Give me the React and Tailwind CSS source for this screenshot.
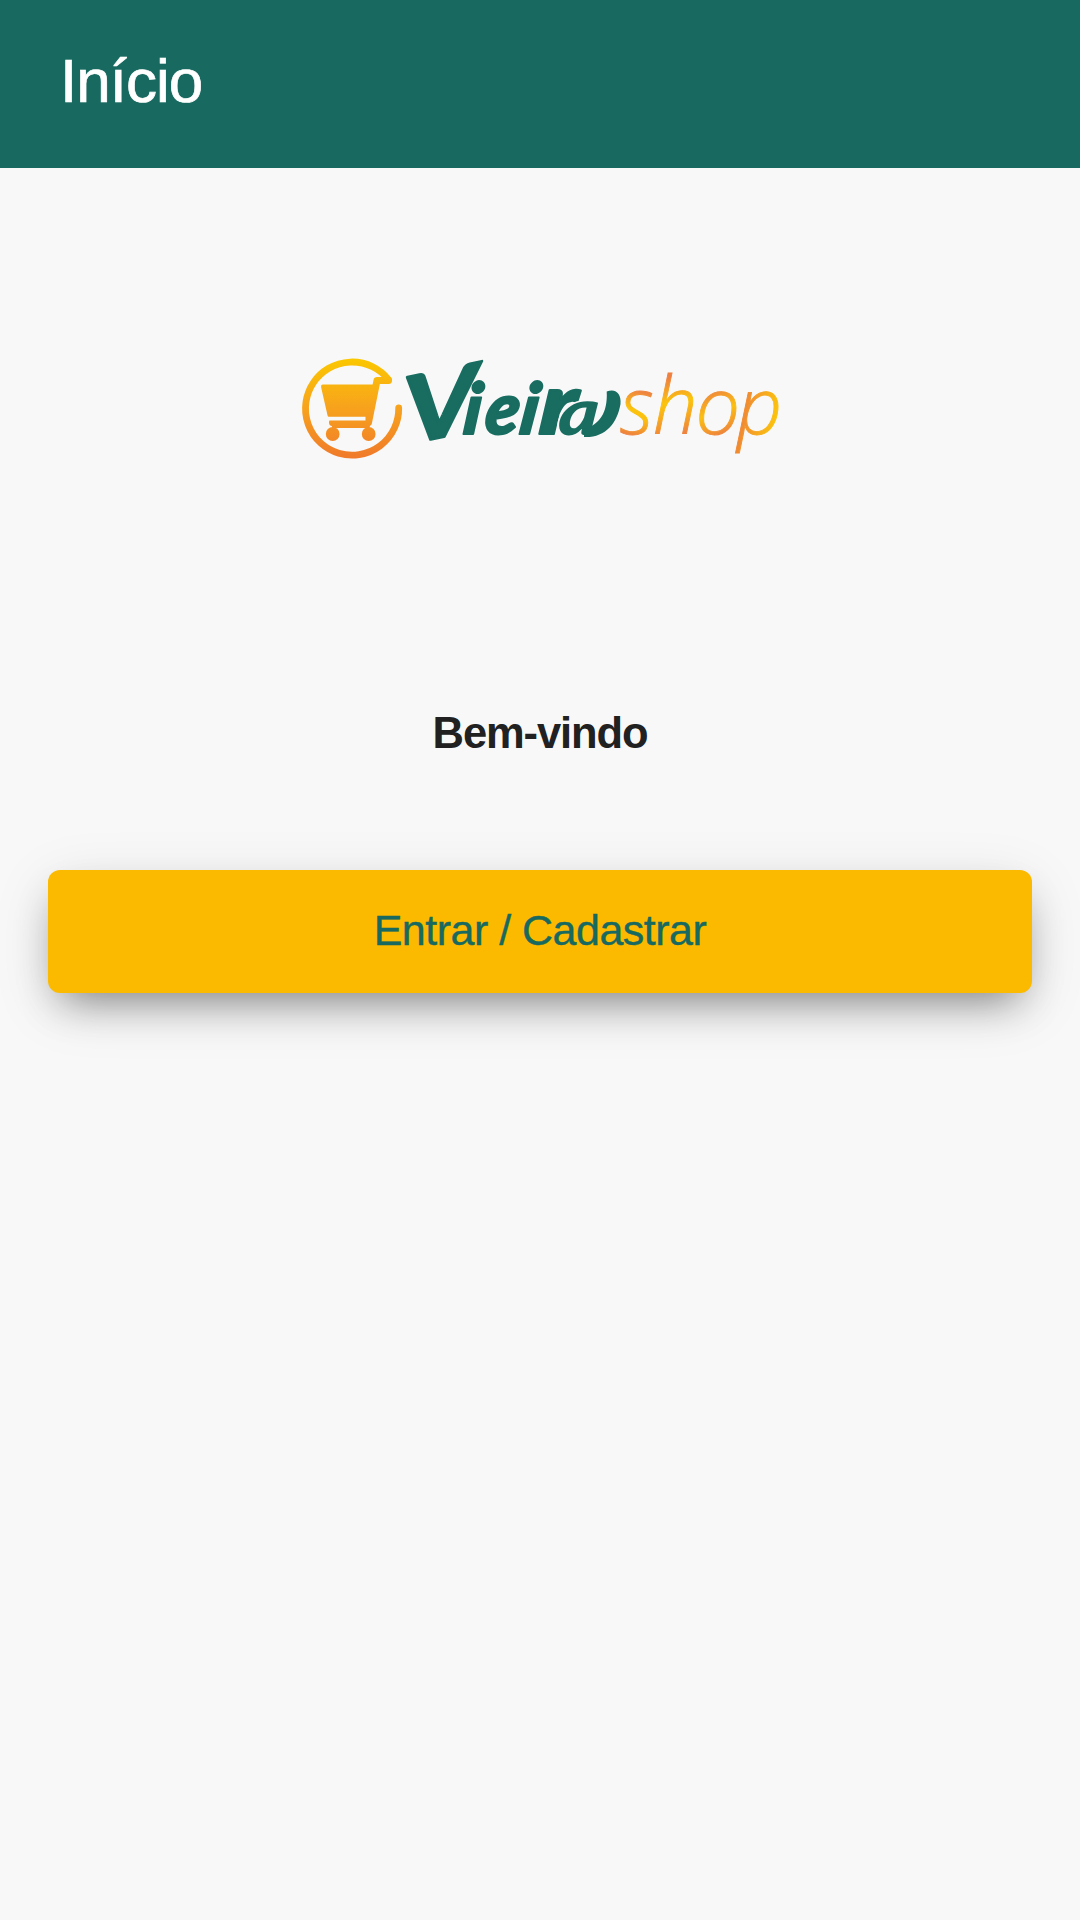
function Logo() {
  return (
    <svg className="block h-[130px] w-[510px] shrink-0 overflow-visible" viewBox="0 0 510 130" role="img" aria-label="Vieira shop">
      <defs>
        <linearGradient id="cart" gradientUnits="userSpaceOnUse" x1="0" y1="18" x2="0" y2="118">
          <stop offset="0" stopColor="#fbc800" />
          <stop offset="0.5" stopColor="#f7a21d" />
          <stop offset="1" stopColor="#f07a2a" />
        </linearGradient>
        <linearGradient id="s-fill" gradientUnits="userSpaceOnUse" x1="354" y1="50" x2="342" y2="96">
          <stop offset="0.05" stopColor="#ee8540" />
          <stop offset="0.45" stopColor="#fbc40c" />
          <stop offset="0.6" stopColor="#fbc010" />
          <stop offset="1" stopColor="#ee8040" />
        </linearGradient>
        <linearGradient id="h-fill" gradientUnits="userSpaceOnUse" x1="378" y1="35" x2="390" y2="95">
          <stop offset="0.05" stopColor="#ee8040" />
          <stop offset="0.45" stopColor="#fbc40c" />
          <stop offset="0.6" stopColor="#f9b416" />
          <stop offset="1" stopColor="#ee8040" />
        </linearGradient>
        <linearGradient id="o-fill" gradientUnits="userSpaceOnUse" x1="415" y1="50" x2="432" y2="96">
          <stop offset="0.05" stopColor="#ee8540" />
          <stop offset="0.5" stopColor="#fbc010" />
          <stop offset="1" stopColor="#ee8040" />
        </linearGradient>
        <linearGradient id="p-fill" gradientUnits="userSpaceOnUse" x1="444" y1="72" x2="488" y2="80">
          <stop offset="0.1" stopColor="#ee8038" />
          <stop offset="0.5" stopColor="#f5a224" />
          <stop offset="1" stopColor="#fcc60a" />
        </linearGradient>
      </defs>
      <g fill="none" stroke="url(#cart)" strokeLinecap="round" strokeLinejoin="round">
        <path strokeWidth="6.8" d="M108.700 68A46.600 46.600 0 1 1 98.500 39.500" />
        <path strokeWidth="7" d="M98.500 40.500H87L78.500 82.500H42.500" />
        <path strokeWidth="4" fill="url(#cart)" d="M33 46.500H86L78 75H39.500Z" />
      </g>
      <g fill="url(#cart)">
        <path d="M84 46L88 47L79.500 88H42.500L39.500 81H75V76H39L34 48Z" />
        <circle cx="42.700" cy="94" r="6.900" />
        <circle cx="78.700" cy="94" r="6.900" />
      </g>
      <path d="M38.500 76.700H75.500V80.500H39.500Z" fill="#f8f8f8" />
      <g
        fill="#186c60"
        stroke="#186c60"
        strokeWidth="2"
        strokeLinejoin="round"
        fontFamily="Lato, sans-serif"
        fontWeight="900"
        fontStyle="italic"
      >
        <text transform="matrix(1.08 -0.23 0.04 0.88 115 105)" fontSize="105" strokeWidth="3" fontWeight="700">V</text>
        <text transform="matrix(1 0 -0.1 1 172 94)" fontSize="71">i</text>
        <text transform="matrix(0.96 0 -0.14 1 193 94)" fontSize="72">e</text>
        <text transform="matrix(1 0 -0.14 1 228 94)" fontSize="71">i</text>
        <text transform="matrix(1.35 0 -0.1 1.12 248 94)" fontSize="76">r</text>
        <text transform="matrix(1.15 0 -0.1 0.98 267 95)" fontSize="66" stroke="#f8f8f8" strokeWidth="3" paintOrder="stroke">a</text>
      </g>
      <path d="M316.700 51.500C326 48 331.500 54 330.500 64C327 84 315 98 294 97V89C309 85 318 73 316.700 51.500Z" fill="#186c60" />
      <g fontSize="79" strokeWidth="0.900" fontFamily="'Open Sans', sans-serif" fontWeight="300" fontStyle="italic">
        <text x="330" y="94" fill="url(#s-fill)" stroke="url(#s-fill)">s</text>
        <text x="363" y="94" fill="url(#h-fill)" stroke="url(#h-fill)">h</text>
        <text x="405.500" y="94" fill="url(#o-fill)" stroke="url(#o-fill)">o</text>
        <text x="447" y="94" fill="url(#p-fill)" stroke="url(#p-fill)">p</text>
      </g>
    </svg>
  );
}

export default function App() {
  return (
    <div className="flex min-h-[1920px] w-full flex-col bg-[#f8f8f8] font-['Liberation_Sans',sans-serif]">
      <header className="flex h-[168px] items-start bg-[#18695f] px-[60px] pt-[45px]">
        <h1 className="text-[62px] leading-[72px] tracking-[-1px] text-white [-webkit-text-stroke:0.700px_white]">Início</h1>
      </header>
      <main className="flex flex-col items-center px-12 pt-[172px]">
        <div className="flex w-[500px] justify-start">
          <Logo />
        </div>
        <h2 className="mt-[238px] text-[43.500px] leading-[50px] font-bold tracking-[-1.100px] text-[#212121]">Bem-vindo</h2>
        <button className="mt-[112px] h-[123px] w-full rounded-xl bg-[#fbba00] pb-[2px] text-[43px] tracking-[-0.500px] text-[#18695f] shadow-[0_20px_42px_-14px_rgba(0,0,0,0.44),0_14px_60px_0_rgba(0,0,0,0.11)] [-webkit-text-stroke:0.400px_#18695f]">
          Entrar / Cadastrar
        </button>
      </main>
    </div>
  );
}
